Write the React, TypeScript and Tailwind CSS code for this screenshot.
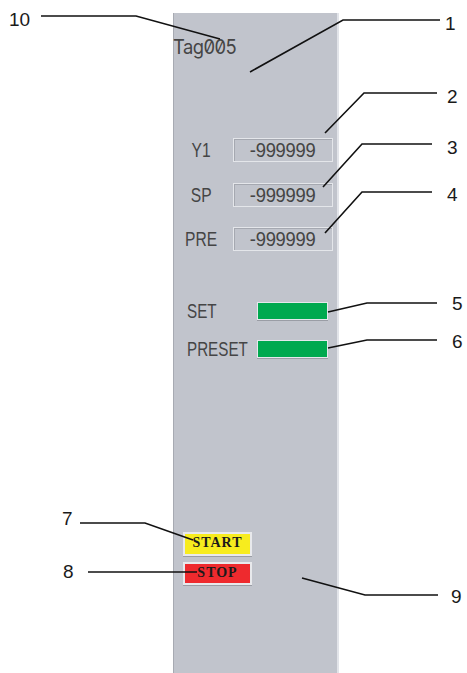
import React from "react";

const callouts: { n: string; x: number; y: number }[] = [
  { n: "10", x: 9, y: 10 },
  { n: "1", x: 445, y: 14 },
  { n: "2", x: 447, y: 87 },
  { n: "3", x: 447, y: 138 },
  { n: "4", x: 447, y: 185 },
  { n: "5", x: 452, y: 294 },
  { n: "6", x: 452, y: 332 },
  { n: "7", x: 62, y: 509 },
  { n: "8", x: 63, y: 562 },
  { n: "9", x: 451, y: 587 },
];

const paths = [
  "M41 16 H136 L220 39",
  "M440 20 H343 L250 72",
  "M437 93 H364 L325 133",
  "M432 144 H362 L323 187",
  "M432 192 H362 L325 233",
  "M437 303 H367 L328 312",
  "M437 340 H367 L328 348",
  "M80 523 H145 L193 540",
  "M88 572 H197",
  "M302 578 L365 595 H438",
];

const sans = { fontFamily: "'Liberation Sans', Arial, sans-serif" };
const serif = { fontFamily: "'Liberation Serif', 'DejaVu Serif', serif" };

function ValueRow({ label }: { label: string }) {
  return (
    <div className="flex h-[24px] items-center">
      <div className="w-[59px] pr-[6px] text-center text-[20px] leading-none text-[#454545] scale-x-[0.78]" style={sans}>
        {label}
      </div>
      <div className="flex h-[24px] w-[100px] items-center justify-center border border-[#e4e6ea] bg-[#c1c4cc] shadow-[inset_1px_1px_0_#a5a8b0]">
        <span className="text-[20px] leading-none text-[#454545] tracking-[-0.3px] scale-x-[0.92]" style={sans}>
          -999999
        </span>
      </div>
    </div>
  );
}

function LampRow({ label }: { label: string }) {
  return (
    <div className="flex h-[18px] items-center pl-[13px]">
      <div className="w-[70px] text-[20px] leading-none text-[#454545] origin-left scale-x-[0.76]" style={sans}>
        {label}
      </div>
      <div className="h-[18px] w-[71px] border border-[#e6e8ec] bg-[#00a94f] shadow-[0_1px_0_#9a9da5]" />
    </div>
  );
}

export default function App() {
  return (
    <div className="relative h-[673px] w-[467px] overflow-hidden bg-white" style={sans}>
      <div className="flex h-full pl-[173px] pt-[13px]">
        <div className="flex h-full w-[166px] flex-col border-l border-l-[#a7aab2] border-r-2 border-r-[#e2e4e9] bg-[#c1c4cc]">
          <div
            className="-ml-[1px] mt-[24px] h-[20px] text-[20px] leading-[20px] text-[#454545] tracking-[-0.6px] origin-left scale-x-[0.92] [font-feature-settings:'zero']"
            style={{ fontFamily: "Inter, 'Liberation Sans', sans-serif" }}
          >
            Tag005
          </div>
          <div className="mt-[81px]">
            <ValueRow label="Y1" />
          </div>
          <div className="mt-[21px]">
            <ValueRow label="SP" />
          </div>
          <div className="mt-[20px]">
            <ValueRow label="PRE" />
          </div>
          <div className="mt-[51px]">
            <LampRow label="SET" />
          </div>
          <div className="mt-[20px]">
            <LampRow label="PRESET" />
          </div>
          <div className="ml-[9px] mt-[174px] flex h-[24px] w-[69px] items-center justify-center border-2 border-[#e8e9ec] bg-[#f7ec1e] pb-[2px] shadow-[0_1px_0_#9a9da5]">
            <span className="text-[14px] font-bold leading-none tracking-[1px] text-[#1a1a1a]" style={serif}>
              START
            </span>
          </div>
          <div className="ml-[9px] mt-[6px] flex h-[23px] w-[69px] items-center justify-center border-2 border-[#e8e9ec] bg-[#ee2a2e] pb-[2px] shadow-[0_1px_0_#9a9da5]">
            <span className="text-[14px] font-bold leading-none tracking-[1px] text-[#1a1a1a]" style={serif}>
              STOP
            </span>
          </div>
        </div>
      </div>

      <svg className="pointer-events-none absolute inset-0" width="467" height="673">
        {paths.map((d, i) => (
          <path key={i} d={d} fill="none" stroke="#111" strokeWidth="1.6" />
        ))}
      </svg>

      {callouts.map((c) => (
        <div
          key={c.n}
          className="absolute text-[19px] leading-none text-[#1a1a1a]"
          style={{ left: c.x, top: c.y }}
        >
          {c.n}
        </div>
      ))}
    </div>
  );
}
